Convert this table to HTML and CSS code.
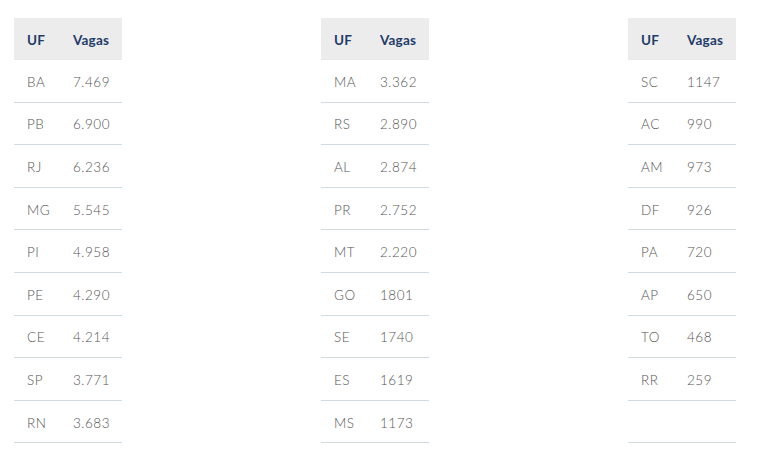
FILE: index.html
```html
<!DOCTYPE html>
<html lang="pt-BR">
<head>
<meta charset="utf-8">
<title>Vagas por UF</title>
<link rel="stylesheet" href="styles.css">
</head>
<body>
<div class="wrap">
  <table class="uf">
    <thead><tr><th class="c1">UF</th><th>Vagas</th></tr></thead>
    <tbody>
      <tr><td>BA</td><td>7.469</td></tr>
      <tr><td>PB</td><td>6.900</td></tr>
      <tr><td>RJ</td><td>6.236</td></tr>
      <tr><td>MG</td><td>5.545</td></tr>
      <tr><td>PI</td><td>4.958</td></tr>
      <tr><td>PE</td><td>4.290</td></tr>
      <tr><td>CE</td><td>4.214</td></tr>
      <tr><td>SP</td><td>3.771</td></tr>
      <tr><td>RN</td><td>3.683</td></tr>
    </tbody>
  </table>
  <table class="uf">
    <thead><tr><th class="c1">UF</th><th>Vagas</th></tr></thead>
    <tbody>
      <tr><td>MA</td><td>3.362</td></tr>
      <tr><td>RS</td><td>2.890</td></tr>
      <tr><td>AL</td><td>2.874</td></tr>
      <tr><td>PR</td><td>2.752</td></tr>
      <tr><td>MT</td><td>2.220</td></tr>
      <tr><td>GO</td><td>1801</td></tr>
      <tr><td>SE</td><td>1740</td></tr>
      <tr><td>ES</td><td>1619</td></tr>
      <tr><td>MS</td><td>1173</td></tr>
    </tbody>
  </table>
  <table class="uf">
    <thead><tr><th class="c1">UF</th><th>Vagas</th></tr></thead>
    <tbody>
      <tr><td>SC</td><td>1147</td></tr>
      <tr><td>AC</td><td>990</td></tr>
      <tr><td>AM</td><td>973</td></tr>
      <tr><td>DF</td><td>926</td></tr>
      <tr><td>PA</td><td>720</td></tr>
      <tr><td>AP</td><td>650</td></tr>
      <tr><td>TO</td><td>468</td></tr>
      <tr><td>RR</td><td>259</td></tr>
      <tr><td></td><td></td></tr>
    </tbody>
  </table>
</div>
</body>
</html>
```
FILE: styles.css
```css
html, body {
  margin: 0;
  background: #ffffff;
}
.wrap {
  display: flex;
  justify-content: space-between;
  align-items: flex-start;
  padding: 18px 41px 0 14px;
  font-family: "Lato", "Open Sans", sans-serif;
}
.uf {
  width: 108px;
  border-collapse: collapse;
  table-layout: fixed;
}
.uf th {
  background: #ececec;
  color: #1f3c68;
  font-weight: 700;
  font-size: 13.5px;
  letter-spacing: 0.2px;
  text-align: left;
  height: 39px;
  padding: 2px 0 0 13px;
  border-bottom: 1px solid #e6e9ea;
}
.uf th.c1 {
  width: 33px;
}
.uf td {
  color: #555555;
  font-weight: 300;
  font-size: 13.5px;
  letter-spacing: 0.5px;
  height: 39.6px;
  padding: 2px 0 0 13px;
  border-bottom: 1px solid #cfdbe0;
  white-space: nowrap;
}
```
